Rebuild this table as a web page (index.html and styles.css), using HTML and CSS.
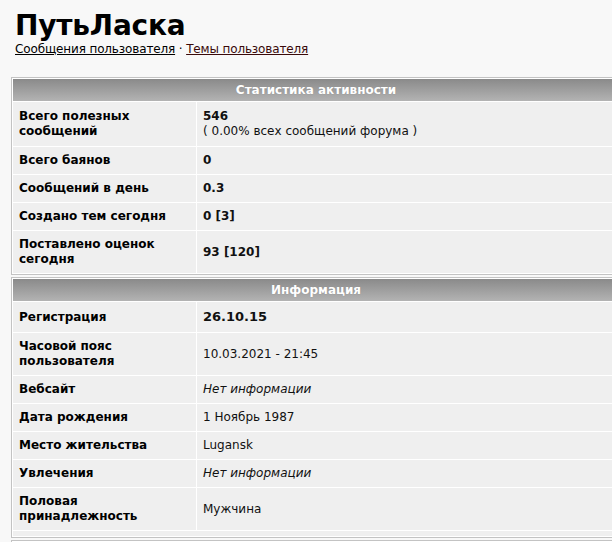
FILE: index.html
```html
<!DOCTYPE html>
<html lang="ru">
<head>
<meta charset="utf-8">
<title>ПутьЛаска</title>
<link rel="stylesheet" href="styles.css">
</head>
<body>
<div class="page">
  <header class="profile-head">
    <h1 class="title">ПутьЛаска</h1>
    <nav class="links"><a href="#" class="link">Сообщения пользователя</a> · <a href="#" class="link link-visited">Темы пользователя</a></nav>
  </header>

  <table class="box box-stats">
    <thead>
      <tr><th colspan="2" class="box-head">Статистика активности</th></tr>
    </thead>
    <tbody>
      <tr class="row-tall">
        <td class="label">Всего полезных сообщений</td>
        <td class="value"><b>546</b><br>( 0.00% всех сообщений форума )</td>
      </tr>
      <tr><td class="label">Всего баянов</td><td class="value"><b>0</b></td></tr>
      <tr><td class="label">Сообщений в день</td><td class="value"><b>0.3</b></td></tr>
      <tr><td class="label">Создано тем сегодня</td><td class="value"><b>0 [3]</b></td></tr>
      <tr><td class="label">Поставлено оценок сегодня</td><td class="value"><b>93 [120]</b></td></tr>
    </tbody>
  </table>

  <table class="box box-info">
    <thead>
      <tr><th colspan="2" class="box-head">Информация</th></tr>
    </thead>
    <tbody>
      <tr><td class="label">Регистрация</td><td class="value value-big"><b>26.10.15</b></td></tr>
      <tr><td class="label">Часовой пояс пользователя</td><td class="value">10.03.2021 - 21:45</td></tr>
      <tr><td class="label">Вебсайт</td><td class="value"><i>Нет информации</i></td></tr>
      <tr><td class="label">Дата рождения</td><td class="value">1 Ноябрь 1987</td></tr>
      <tr><td class="label">Место жительства</td><td class="value">Lugansk</td></tr>
      <tr><td class="label">Увлечения</td><td class="value"><i>Нет информации</i></td></tr>
      <tr><td class="label">Половая принадлежность</td><td class="value">Мужчина</td></tr>
    </tbody>
    <tfoot>
      <tr><td colspan="2" class="box-foot"></td></tr>
    </tfoot>
  </table>

  <table class="box box-next">
    <thead>
      <tr><th colspan="2" class="box-head"></th></tr>
    </thead>
  </table>
</div>
</body>
</html>
```
FILE: styles.css
```css
html, body {
  margin: 0;
  padding: 0;
  background: #f8f8f8;
  overflow: hidden;
}

body {
  font-family: "DejaVu Sans", Verdana, sans-serif;
  font-size: 12px;
  color: #000;
}

.page {
  padding: 0 0 0 11px;
  width: 610px;
}

.profile-head {
  padding: 10px 0 0 4px;
  margin-bottom: 20px;
}

.title {
  margin: 0;
  font-size: 28px;
  line-height: 32px;
  font-weight: bold;
  color: #000;
  letter-spacing: -0.2px;
}

.links {
  line-height: 15px;
  color: #000;
  letter-spacing: -0.14px;
}

.link {
  color: #000;
  text-decoration: underline;
}

.link-visited {
  color: #3a0a0a;
}

.box {
  width: 610px;
  border: 1px solid #c3c3c3;
  border-collapse: separate;
  border-spacing: 1px;
  background: #fff;
  margin-bottom: 2px;
}

.box-stats {
  margin-bottom: 2px;
}

.box-head {
  height: 22px;
  box-sizing: border-box;
  padding: 4px 6px 3px;
  line-height: 15px;
  font-weight: bold;
  color: #fff;
  text-align: center;
  background: linear-gradient(#8a8a8a, #b3b3b3);
  text-shadow: 0 0 1px #8a8a8a;
}

.label,
.value {
  background: #efefef;
  padding: 6px;
  line-height: 15px;
  vertical-align: middle;
  text-align: left;
}

.label {
  width: 171px;
  font-weight: bold;
}

.value {
  color: #111;
}

.row-tall .label,
.row-tall .value {
  padding-top: 7px;
  padding-bottom: 7px;
}

.value-big {
  font-size: 13px;
  line-height: 18px;
}

.box-foot {
  background: #efefef;
  height: 5px;
  padding: 0;
}
```
